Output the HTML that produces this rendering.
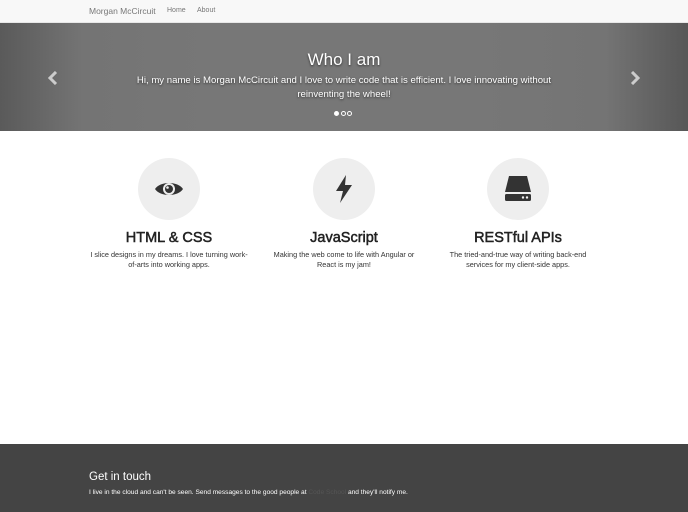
<!DOCTYPE html>
<html><head><style>
*{margin:0;padding:0;box-sizing:border-box}
body{width:688px;height:512px;overflow:hidden;font-family:"Liberation Sans",sans-serif;background:#fff;position:relative}
.nav{position:absolute;top:0;left:0;width:688px;height:23px;background:#f8f8f8;border-bottom:1px solid #e7e7e7}
.nav span{position:absolute;top:7px;color:#777;font-size:7px}
.car{position:absolute;top:23px;left:0;width:688px;height:108px;background:linear-gradient(90deg,#5a5a5a 0%,#747474 12%,#777 30%,#777 70%,#747474 88%,#575757 100%)}
.car h1{position:absolute;top:27px;width:100%;text-align:center;color:#fff;font-size:17px;font-weight:normal;text-shadow:0 1px 2px rgba(0,0,0,.6)}
.car p{position:absolute;top:51px;left:124px;width:440px;text-align:center;color:#fff;font-size:9.6px;line-height:14px;text-shadow:0 1px 2px rgba(0,0,0,.6)}
.arr{position:absolute;top:48px;width:12px;height:14px}
.dots{position:absolute;top:86px;left:334px;line-height:5px}
.dots i{display:inline-block;width:5px;height:5px;border-radius:50%;border:1px solid #fff;margin-right:1.5px}
.col{position:absolute;top:158px;width:174px;text-align:center}
.circ{width:62px;height:62px;border-radius:50%;background:#eee;margin:0 auto;display:flex;align-items:center;justify-content:center}
.col h2{margin-top:10px;font-size:14.5px;font-weight:normal;color:#222;-webkit-text-stroke:0.5px #222}
.col p{margin-top:4px;font-size:7.3px;line-height:10px;color:#333}
.foot{position:absolute;top:444px;left:0;width:688px;height:68px;background:#444;color:#fff}
.foot h3{position:absolute;top:27px;left:89px;font-size:11.5px;font-weight:normal}
.foot p{position:absolute;top:45px;left:89px;font-size:6.6px}
</style></head><body>
<div class="nav"><span style="left:89px;font-size:8.5px;top:6px">Morgan McCircuit</span><span style="left:167px">Home</span><span style="left:197px">About</span></div>
<div class="car">
<svg class="arr" style="left:47px" viewBox="0 0 12 14"><path d="M9 1L3 7L9 13" stroke="#ccc" stroke-width="3" fill="none"/></svg>
<svg class="arr" style="left:629px" viewBox="0 0 12 14"><path d="M3 1L9 7L3 13" stroke="#ccc" stroke-width="3" fill="none"/></svg>
<h1>Who I am</h1>
<p>Hi, my name is Morgan McCircuit and I love to write code that is efficient. I love innovating without<br>reinventing the wheel!</p>
<div class="dots"><i style="background:#fff"></i><i></i><i></i></div>
</div>
<div class="col" style="left:82px"><div class="circ"><svg width="30" height="22" viewBox="0 0 30 22"><path d="M1 11C6 3 24 3 29 11C24 19 6 19 1 11Z" fill="#333"/><circle cx="15" cy="11" r="6" fill="#eee"/><circle cx="15" cy="11" r="4" fill="#333"/><circle cx="13.5" cy="9.5" r="1.3" fill="#eee"/></svg></div><h2>HTML &amp; CSS</h2><p>I slice designs in my dreams. I love turning work-<br>of-arts into working apps.</p></div>
<div class="col" style="left:257px"><div class="circ"><svg width="18" height="28" viewBox="0 0 18 28"><path d="M11 0L1 16H8L5 28L17 10H10Z" fill="#333"/></svg></div><h2>JavaScript</h2><p>Making the web come to life with Angular or<br>React is my jam!</p></div>
<div class="col" style="left:431px"><div class="circ"><svg width="28" height="26" viewBox="0 0 28 26"><path d="M5 0H23L27 16H1Z" fill="#333"/><rect x="1" y="18" width="26" height="7" rx="1.5" fill="#333"/><circle cx="19" cy="21.5" r="1.2" fill="#eee"/><circle cx="23" cy="21.5" r="1.2" fill="#eee"/></svg></div><h2>RESTful APIs</h2><p>The tried-and-true way of writing back-end<br>services for my client-side apps.</p></div>
<div class="foot"><h3>Get in touch</h3><p>I live in the cloud and can't be seen. Send messages to the good people at <span style="color:#555">Code School</span> and they'll notify me.</p></div>
</body></html>
